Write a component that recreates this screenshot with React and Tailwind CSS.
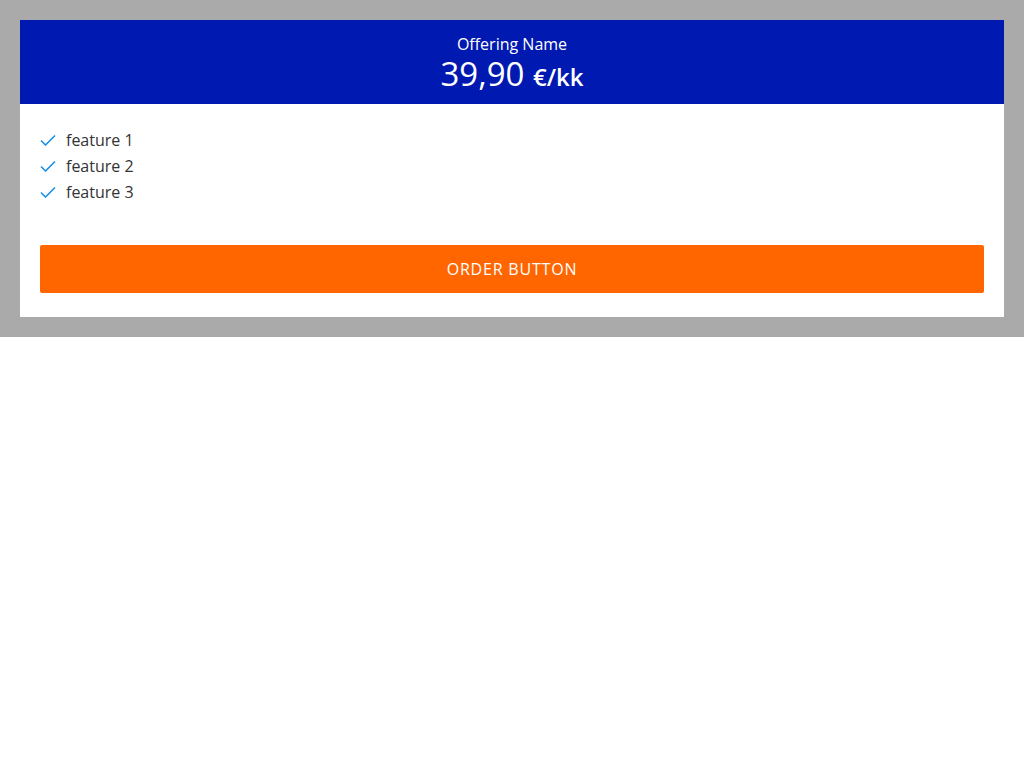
import React from "react";

const features = ["feature 1", "feature 2", "feature 3"];

const CheckIcon = () => (
  <svg width="16" height="12" viewBox="0 0 16 12" fill="none" className="shrink-0">
    <path d="M1 6.5 L5.5 11 L15 1.5" stroke="#1b8fe6" strokeWidth="1.6" />
  </svg>
);

const App = () => {
  return (
    <div className="bg-[#aaaaaa] p-5 font-['Open_Sans',sans-serif]">
      <div className="bg-white">
        <div className="bg-[#0019b0] text-white text-center h-[84px] pt-[13px]">
          <div className="text-[16px] leading-[22px]">Offering Name</div>
          <div className="text-[33px] leading-[38px]">
            39,90 <span className="text-[24px] font-semibold">€/kk</span>
          </div>
        </div>
        <div className="px-5 pt-[23px] pb-6">
          <ul className="flex flex-col">
            {features.map((f) => (
              <li key={f} className="flex items-center gap-[10px] h-[26px] text-[16px] text-[#333333]">
                <CheckIcon />
                <span>{f}</span>
              </li>
            ))}
          </ul>
          <button className="mt-[40px] w-full h-[48px] bg-[#ff6600] text-white rounded-[2px] text-[16px] tracking-[0.8px] uppercase">
            Order Button
          </button>
        </div>
      </div>
    </div>
  );
};

export default App;
